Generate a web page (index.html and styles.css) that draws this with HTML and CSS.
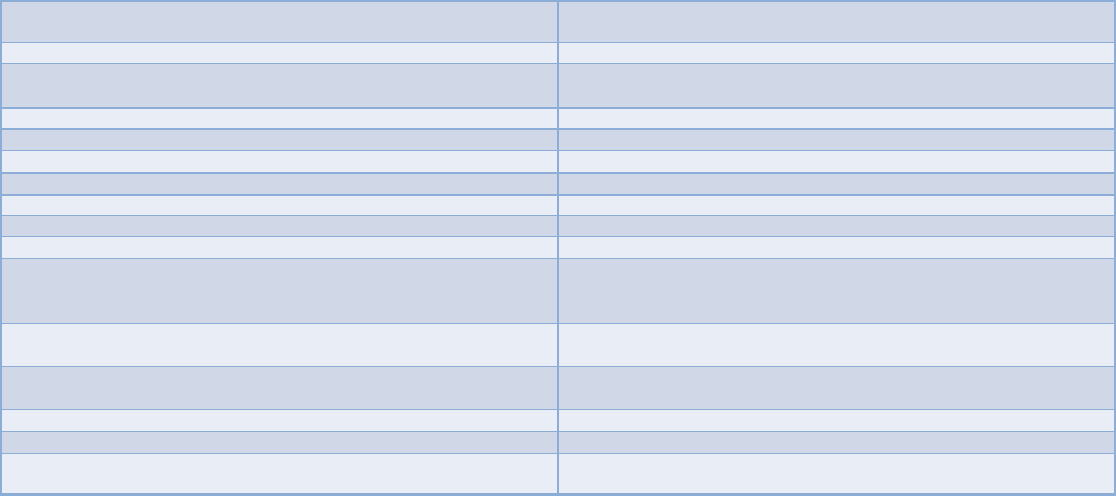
FILE: index.html
```html
<!DOCTYPE html>
<html lang="en">
<head>
<meta charset="utf-8">
<title>Table</title>
<link rel="stylesheet" href="styles.css">
</head>
<body>
<div class="table">
  <div class="row dark h40 g1"><div class="cell"></div><div class="cell"></div></div>
  <div class="row light h20 g1"><div class="cell"></div><div class="cell"></div></div>
  <div class="row dark h43 g2"><div class="cell"></div><div class="cell"></div></div>
  <div class="row light h19 g2"><div class="cell"></div><div class="cell"></div></div>
  <div class="row dark h20 g1"><div class="cell"></div><div class="cell"></div></div>
  <div class="row light h21 g2"><div class="cell"></div><div class="cell"></div></div>
  <div class="row dark h20 g2"><div class="cell"></div><div class="cell"></div></div>
  <div class="row light h19 g1"><div class="cell"></div><div class="cell"></div></div>
  <div class="row dark h20 g1"><div class="cell"></div><div class="cell"></div></div>
  <div class="row light h21 g1"><div class="cell"></div><div class="cell"></div></div>
  <div class="row dark h64 g1"><div class="cell"></div><div class="cell"></div></div>
  <div class="row light h42 g1"><div class="cell"></div><div class="cell"></div></div>
  <div class="row dark h42 g1"><div class="cell"></div><div class="cell"></div></div>
  <div class="row light h21 g1"><div class="cell"></div><div class="cell"></div></div>
  <div class="row dark h21 g1"><div class="cell"></div><div class="cell"></div></div>
  <div class="row light h39"><div class="cell"></div><div class="cell"></div></div>
</div>
</body>
</html>
```

FILE: styles.css
```css
html, body {
  margin: 0;
  padding: 0;
  background: #ffffff;
  font-family: "Liberation Sans", Arial, sans-serif;
}

.table {
  width: 1116px;
  height: 496px;
  box-sizing: border-box;
  border: 2px solid #8dadd9;
  border-bottom-width: 3px;
  background: #8dadd9;
  display: flex;
  flex-direction: column;
}

.row {
  display: grid;
  grid-template-columns: 1fr 1fr;
  column-gap: 2px;
  flex: none;
}

.dark .cell { background: #d0d8e7; }
.light .cell { background: #e8edf6; }

.g1 { margin-bottom: 1px; }
.g2 { margin-bottom: 2px; }

.h19 { height: 19px; }
.h20 { height: 20px; }
.h21 { height: 21px; }
.h39 { height: 39px; }
.h40 { height: 40px; }
.h42 { height: 42px; }
.h43 { height: 43px; }
.h64 { height: 64px; }
```
